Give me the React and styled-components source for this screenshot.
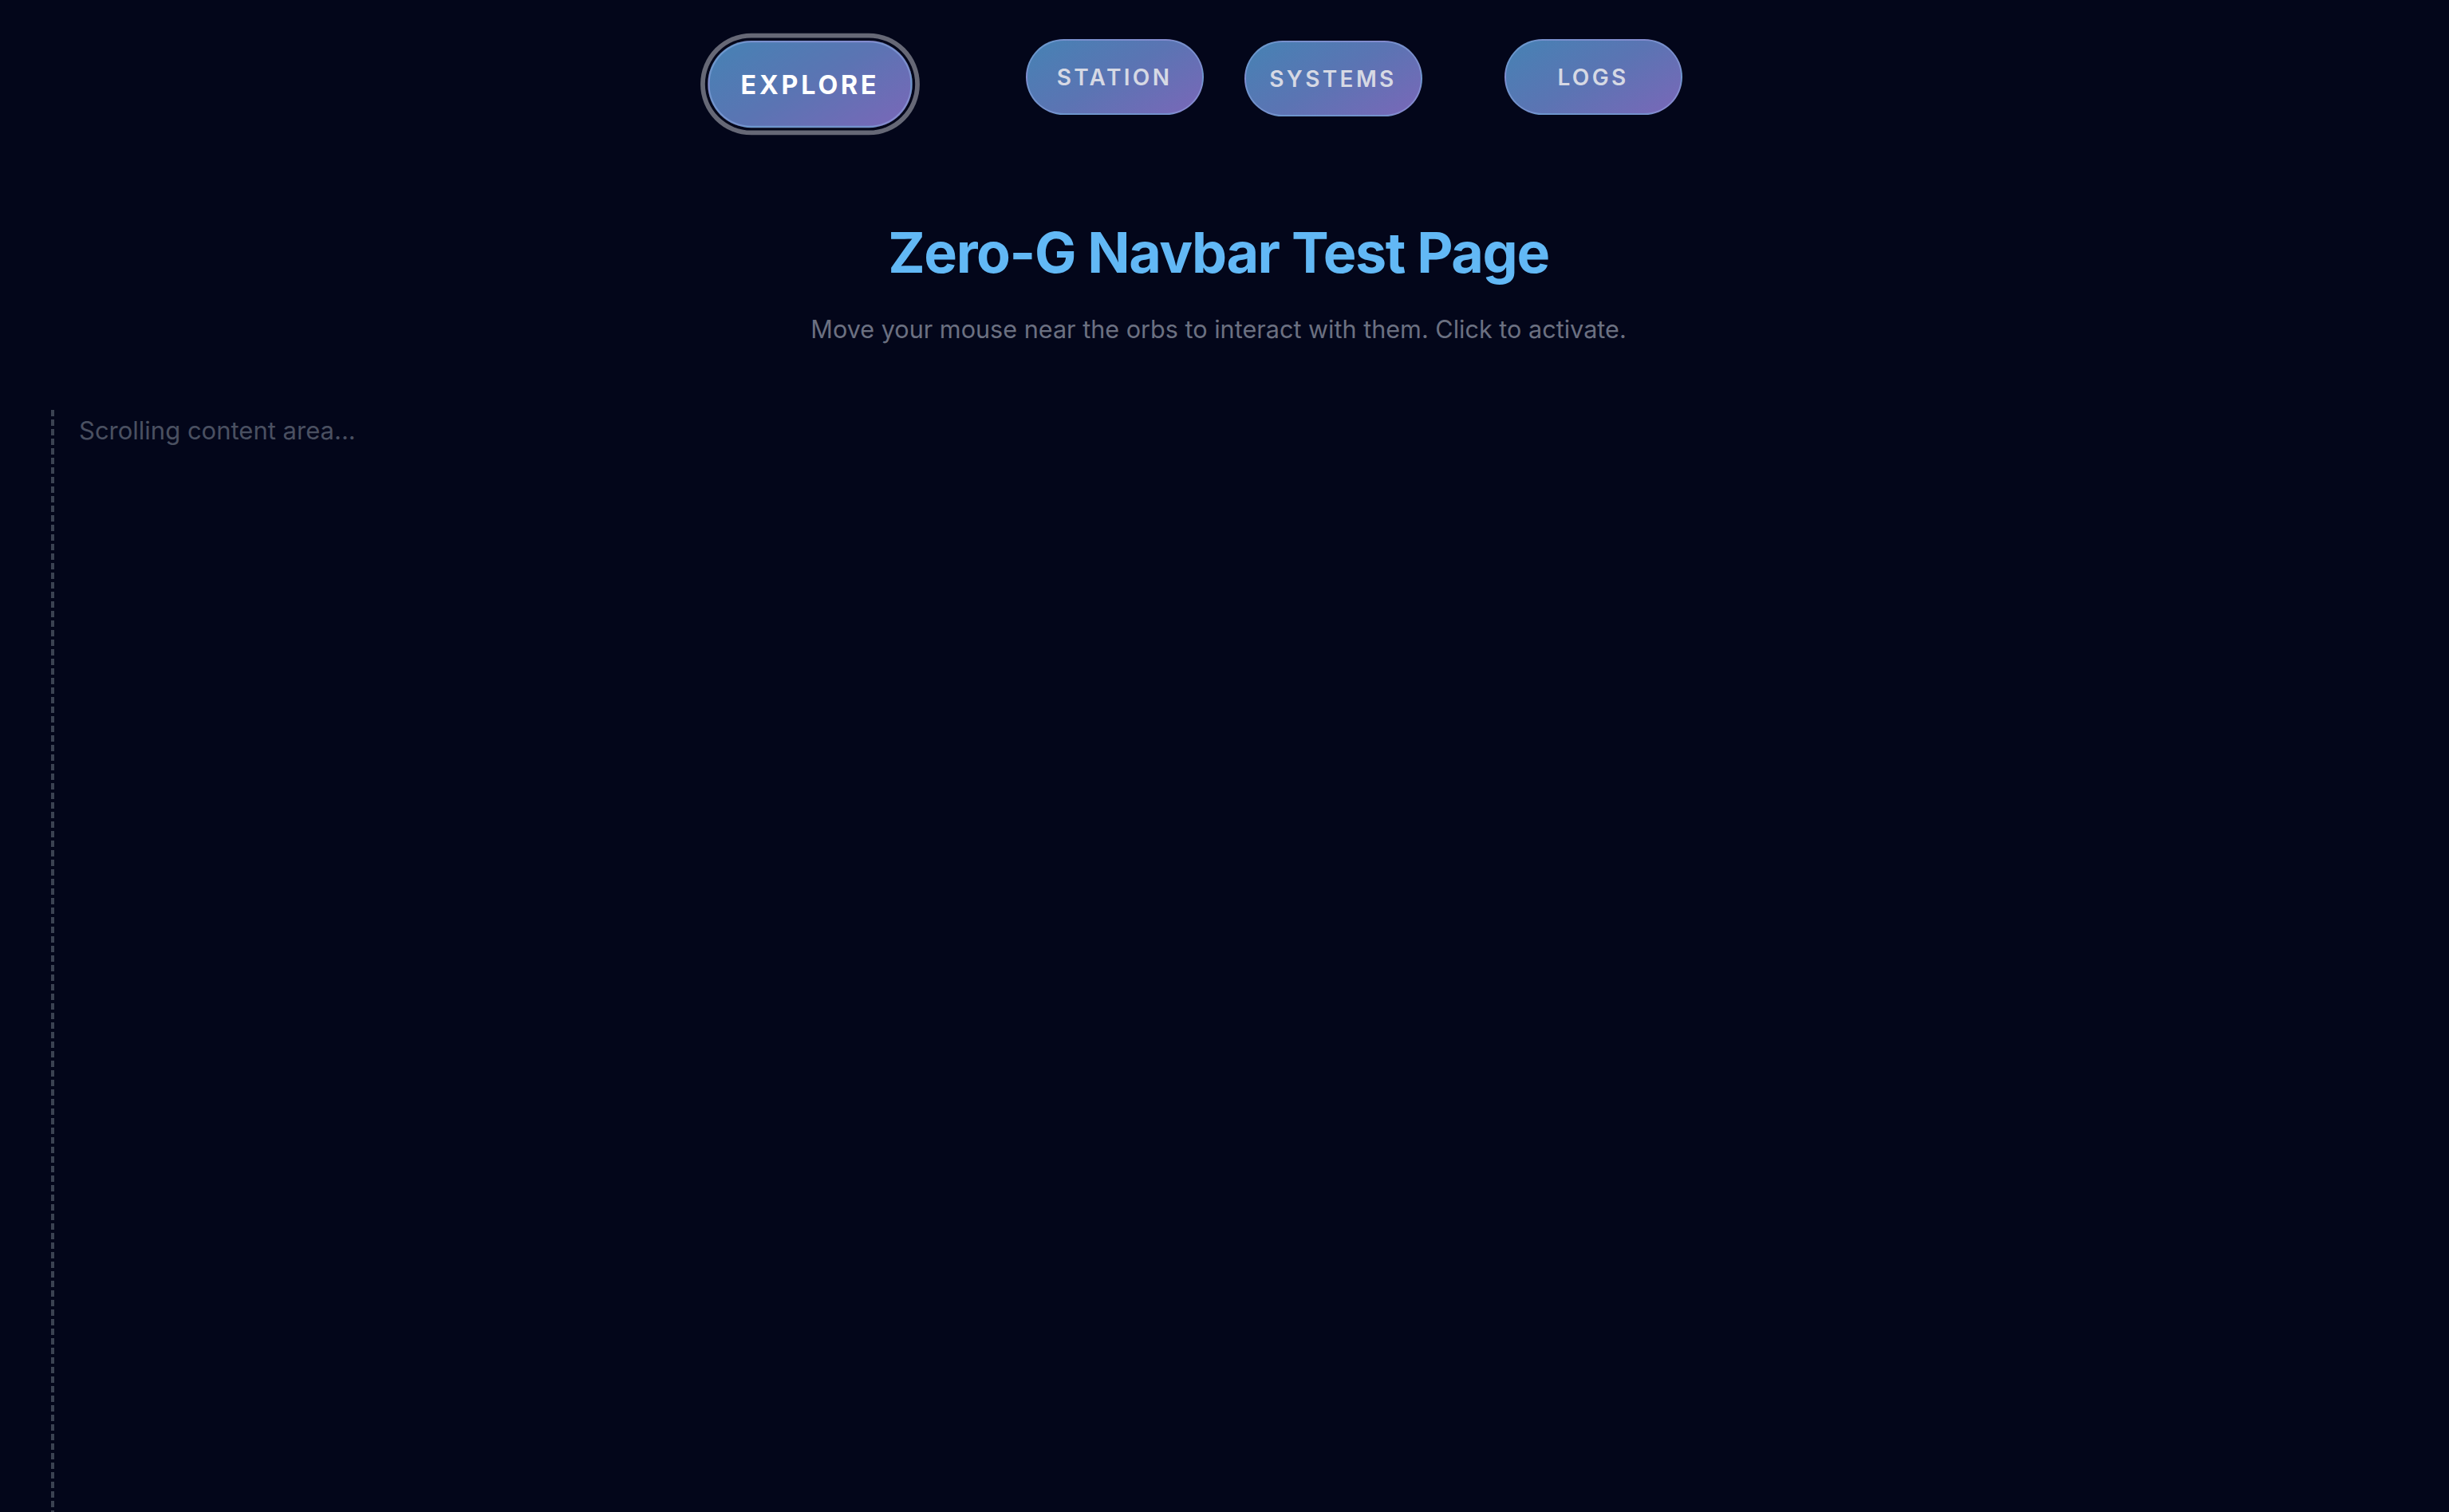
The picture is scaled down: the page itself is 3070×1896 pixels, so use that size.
import React from "react";
import styled, { createGlobalStyle } from "styled-components";

const GlobalStyle = createGlobalStyle`
  html, body {
    margin: 0;
    padding: 0;
    background: #03061a;
  }
  body {
    font-family: Inter, "Noto Sans", "Liberation Sans", sans-serif;
    overflow: hidden;
  }
`;

const Page = styled.div`
  height: 100vh;
  display: flex;
  flex-direction: column;
  padding-right: 15px;
  box-sizing: border-box;
  background: #03061a;
`;

const Nav = styled.nav`
  display: flex;
  justify-content: center;
  gap: 100px;
  padding-top: 49px;
`;

const Orb = styled.button`
  width: 223px;
  height: 95px;
  flex: none;
  border-radius: 48px;
  border: 2px solid rgba(150, 180, 235, 0.45);
  background: linear-gradient(150deg, #4682b4 0%, #5b74b3 50%, #7a67b8 100%);
  color: ${(p) => (p.$active ? "#ffffff" : "#d6d9e4")};
  font-family: Inter, "Liberation Sans", sans-serif;
  font-size: 28px;
  font-weight: ${(p) => (p.$active ? 700 : 600)};
  letter-spacing: 0.12em;
  text-transform: uppercase;
  cursor: pointer;
  transform: translate(${(p) => p.$dx}px, ${(p) => p.$dy}px)
    scale(${(p) => (p.$active ? 1.15 : 1)});
  box-shadow: ${(p) =>
    p.$active
      ? "0 0 0 3px #03061a, 0 0 0 8px rgba(120, 122, 135, 0.85)"
      : "none"};
`;

const Header = styled.header`
  text-align: center;
  margin-top: 131px;
`;

const Title = styled.h1`
  margin: 0;
  font-size: 70px;
  line-height: 84px;
  font-weight: 700;
  letter-spacing: -0.02em;
  color: #62b8f5;
`;

const Subtitle = styled.p`
  margin: 31px 0 0;
  font-size: 30.6px;
  line-height: 45px;
  color: #6b7081;
`;

const Scroller = styled.section`
  flex: 1;
  margin: 79px 0 0 64px;
  padding-left: 35px;
  background-image: repeating-linear-gradient(
    to bottom,
    #3b4252 0 8px,
    transparent 8px 12px
  );
  background-size: 4px 100%;
  background-repeat: no-repeat;
`;

const ScrollText = styled.p`
  margin: 0;
  font-size: 31px;
  line-height: 52px;
  color: #4a5061;
`;

const orbs = [
  { label: "Explore", dx: -28, dy: 9, active: true },
  { label: "Station", dx: 31, dy: 0 },
  { label: "Systems", dx: -18, dy: 2 },
  { label: "Logs", dx: -15, dy: 0 },
];

export default function App() {
  return (
    <>
      <GlobalStyle />
      <Page>
        <Nav>
          {orbs.map((o) => (
            <Orb key={o.label} $dx={o.dx} $dy={o.dy} $active={o.active}>
              {o.label}
            </Orb>
          ))}
        </Nav>

        <Header>
          <Title>Zero-G Navbar Test Page</Title>
          <Subtitle>
            Move your mouse near the orbs to interact with them. Click to
            activate.
          </Subtitle>
        </Header>

        <Scroller>
          <ScrollText>Scrolling content area...</ScrollText>
        </Scroller>
      </Page>
    </>
  );
}
